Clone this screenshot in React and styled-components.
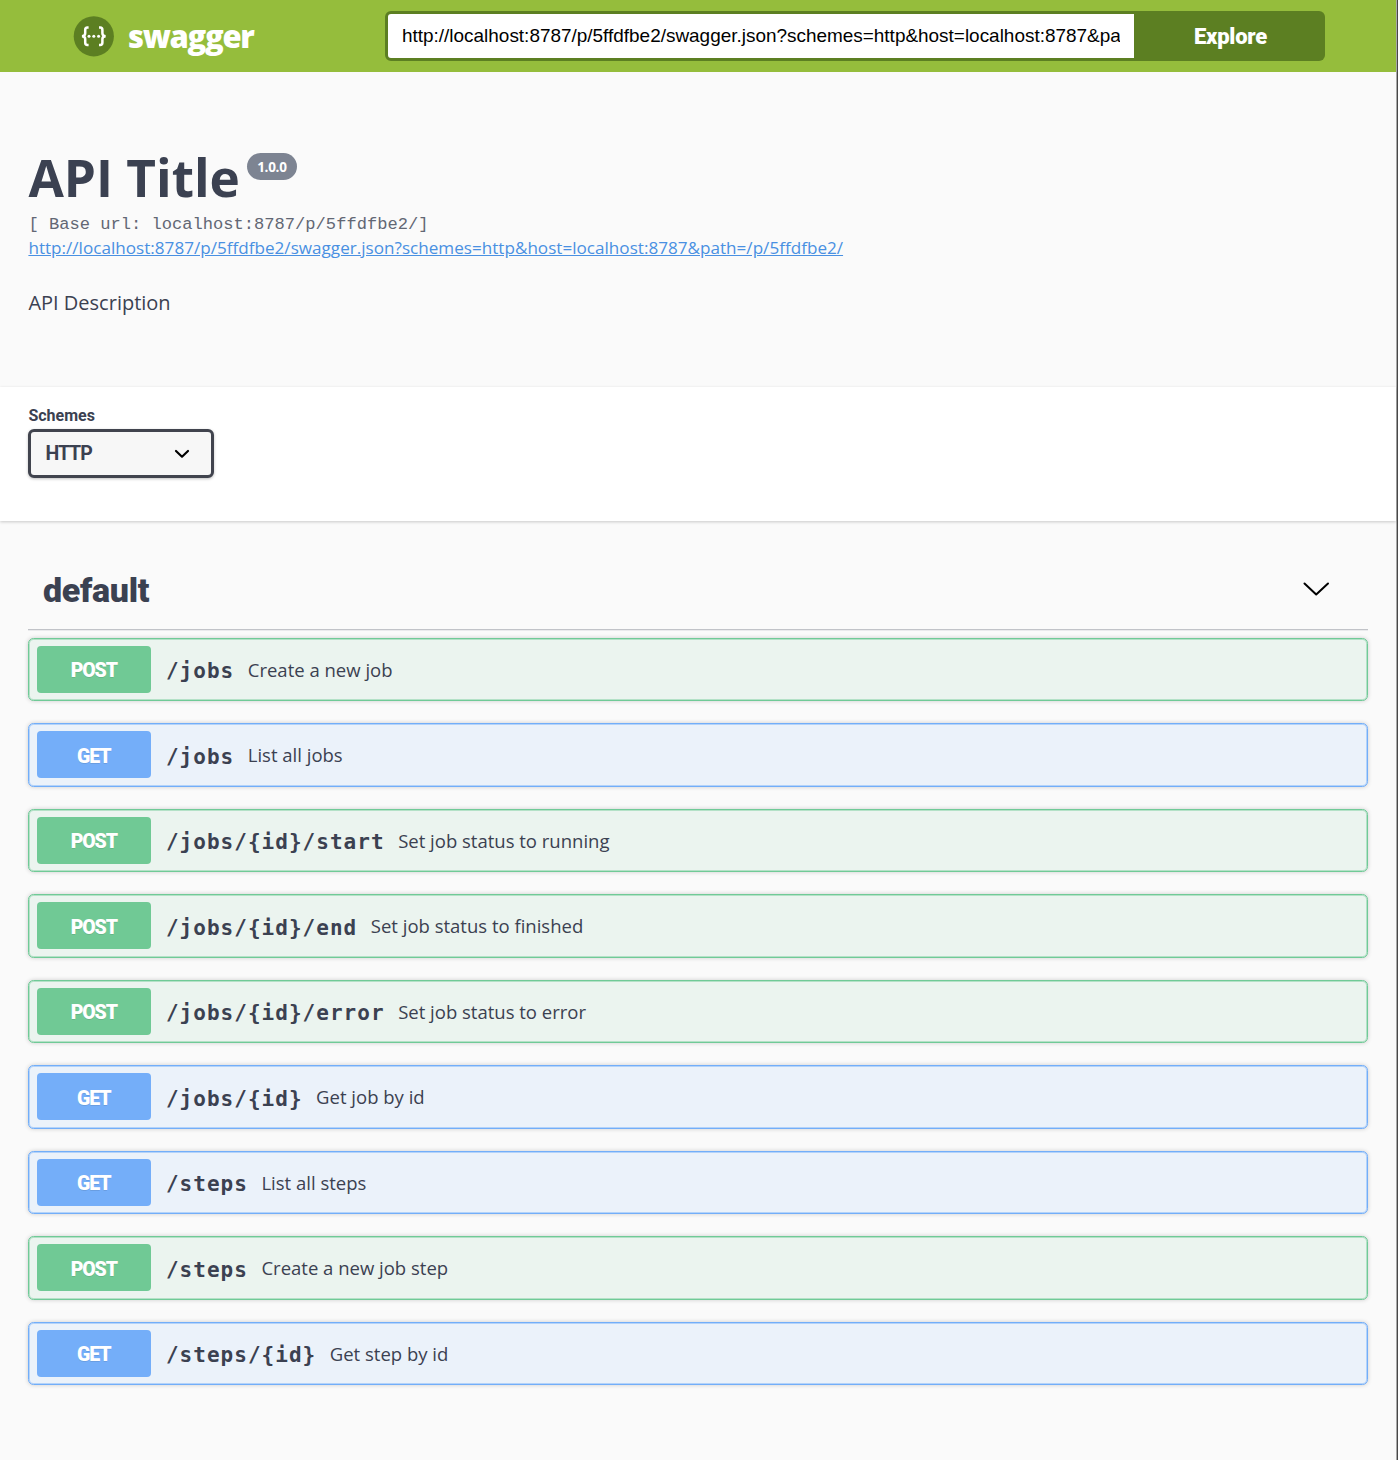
import React from 'react';
import styled, { createGlobalStyle } from 'styled-components';

const heading = 'Roboto, "Noto Sans", sans-serif';
const body = '"Open Sans", "Noto Sans", sans-serif';
const mono = '"DejaVu Sans Mono", monospace';
const ink = '#3b4151';

const Global = createGlobalStyle`
  *, *::before, *::after { box-sizing: border-box; }
  body { margin: 0; background: #fafafa; }
`;

const Page = styled.div`
  height: 1460px;
  overflow: hidden;
  background: #fafafa;
  border-right: 1px solid #484848;
  box-shadow: inset -1px 0 #a8a8a8;
  padding-right: 1px;
  color: ${ink};
  font-family: ${body};
`;

const Topbar = styled.header`
  height: 72px;
  padding: 11px 71px 0 73px;
  display: flex;
  background: #95bd3c;
`;

const Brand = styled.div`
  width: 312px;
  height: 50px;
  display: flex;
  align-items: center;
  gap: 14px;
`;

const BrandName = styled.span`
  font: 800 31px/40px ${body};
  letter-spacing: -1.35px;
  color: #fff;
`;

const UrlInput = styled.input`
  width: 750px;
  height: 49.5px;
  margin: 0;
  padding: 0 14px;
  border: 3px solid #5c7f22;
  border-right-width: 1px;
  border-radius: 6px 0 0 6px;
  background: #fff;
  color: #000;
  font: 18.94px "Liberation Sans", Arial, sans-serif;
  outline: none;
`;

const Explore = styled.button`
  width: 190px;
  height: 49.5px;
  padding: 1px 0 0 1px;
  border: 0;
  border-radius: 0 6px 6px 0;
  background: #5c7f22;
  color: #fff;
  font: 900 22px/49px ${heading};
  letter-spacing: -0.2px;
`;

const Info = styled.section`
  height: 315px;
  padding: 70px 28.4px 0;
`;

const TitleRow = styled.div`
  height: 73px;
  display: flex;
  align-items: flex-start;
`;

const Title = styled.h1`
  margin: 0;
  font: 700 51.3px/70px ${body};
`;

const Version = styled.span`
  width: 50px;
  height: 27px;
  margin: 11px 0 0 7px;
  border-radius: 14px;
  background: #7d8492;
  color: #fff;
  font: 700 13.5px/28px ${body};
  letter-spacing: -0.3px;
  text-align: center;
`;

const BaseUrl = styled.pre`
  margin: 0;
  height: 21px;
  font: 17.1px/20px "Liberation Mono", monospace;
  color: #626774;
`;

const SpecLink = styled.a`
  display: block;
  width: max-content;
  font: 17.1px/24px ${body};
  letter-spacing: 0.01px;
  color: #4990e2;
  text-decoration: underline;
`;

const Description = styled.p`
  margin: 28px 0 0;
  font: 20px/30px ${body};
`;

const SchemeBar = styled.section`
  height: 134px;
  padding: 20px 28.4px 0;
  background: #fff;
  box-shadow: 0 1px 3px rgba(0, 0, 0, 0.2);
`;

const SchemeLabel = styled.label`
  display: block;
  height: 21.5px;
  font: 700 16px/17px ${heading};
`;

const Select = styled.div`
  width: 185.5px;
  height: 49.5px;
  padding: 1px 20.5px 0 14px;
  display: flex;
  align-items: center;
  justify-content: space-between;
  border: 3px solid #41444e;
  border-radius: 6px;
  background: #f7f7f7;
  box-shadow: 0 1px 3px rgba(0, 0, 0, 0.25);
  font: 700 19.5px/24px ${heading};
  letter-spacing: -1px;
`;

const Operations = styled.main`
  padding: 34px 28.4px 0;
`;

const Tag = styled.h2`
  height: 75px;
  margin: 0 0 7.5px;
  padding: 0 38px 4px 14.5px;
  display: flex;
  align-items: center;
  justify-content: space-between;
  border-bottom: 1px solid #c1c3c8;
  box-shadow: 0 1px #e9eaec;
  font: 900 34px/44px ${heading};
  letter-spacing: -0.3px;

  svg { margin-bottom: 2px; }
`;

const Block = styled.article`
  height: 63.5px;
  margin-bottom: 22px;
  padding: 0 7.4px;
  display: flex;
  align-items: center;
  border: 1px solid ${(p) => (p.$post ? '#70ca97' : '#72aef9')};
  border-radius: 5.5px;
  background: ${(p) => (p.$post ? '#ebf4ef' : '#ebf2fa')};
  box-shadow: inset 0 0 0 1px ${(p) => (p.$post ? 'rgba(112, 202, 151, 0.45)' : 'rgba(114, 174, 249, 0.45)')},
    0 0 4px rgba(0, 0, 0, 0.19);
`;

const Method = styled.span`
  width: 114px;
  height: 47px;
  padding-top: 1.5px;
  border-radius: 4px;
  background: ${(p) => (p.$post ? '#70c995' : '#74aef9')};
  color: #fff;
  font: 900 19.5px/47px ${heading};
  letter-spacing: -1.1px;
  text-align: center;
  text-shadow: 0 1px 0 rgba(0, 0, 0, 0.1);
`;

const Path = styled.span`
  margin: 4px 13.5px 0 15.1px;
  font: 700 21px/30px ${mono};
  letter-spacing: 1.03px;
`;

const Summary = styled.span`
  padding-top: 1px;
  font: 18.5px/28px ${body};
`;

const operations = [
  ['POST', '/jobs', 'Create a new job'],
  ['GET', '/jobs', 'List all jobs'],
  ['POST', '/jobs/{id}/start', 'Set job status to running'],
  ['POST', '/jobs/{id}/end', 'Set job status to finished'],
  ['POST', '/jobs/{id}/error', 'Set job status to error'],
  ['GET', '/jobs/{id}', 'Get job by id'],
  ['GET', '/steps', 'List all steps'],
  ['POST', '/steps', 'Create a new job step'],
  ['GET', '/steps/{id}', 'Get step by id'],
];

const specUrl = 'http://localhost:8787/p/5ffdfbe2/swagger.json?schemes=http&host=localhost:8787&path=/p/5ffdfbe2/';

function Logo() {
  return (
    <svg width="41" height="41" viewBox="0 0 41 41" fill="none">
      <circle cx="20.8" cy="20.3" r="20.1" fill="#5c7f22" />
      <g stroke="#fff" strokeWidth="2.5">
        <path d="M15.6 11.6h-1.2q-2.2 0-2.2 2.5v3.2q0 2.9-3.3 2.9 3.3 0 3.3 2.9v3.3q0 2.5 2.2 2.5h1.2" />
        <path d="M26 11.6h1.2q2.2 0 2.2 2.5v3.2q0 2.9 3.3 2.9-3.3 0-3.3 2.9v3.3q0 2.5-2.2 2.5H26" />
      </g>
      <g fill="#fff">
        <circle cx="16" cy="20.2" r="1.5" />
        <circle cx="20.8" cy="20.2" r="1.5" />
        <circle cx="25.6" cy="20.2" r="1.5" />
      </g>
    </svg>
  );
}

export default function App() {
  return (
    <Page>
      <Global />
      <Topbar>
        <Brand>
          <Logo />
          <BrandName>swagger</BrandName>
        </Brand>
        <UrlInput readOnly value={specUrl} />
        <Explore>Explore</Explore>
      </Topbar>
      <Info>
        <TitleRow>
          <Title>API Title</Title>
          <Version>1.0.0</Version>
        </TitleRow>
        <BaseUrl>[ Base url: localhost:8787/p/5ffdfbe2/]</BaseUrl>
        <SpecLink>{specUrl}</SpecLink>
        <Description>API Description</Description>
      </Info>
      <SchemeBar>
        <SchemeLabel>Schemes</SchemeLabel>
        <Select>
          HTTP
          <svg width="16" height="10" viewBox="0 0 16 10" fill="none">
            <path d="M2 2l6 5.7L14 2" stroke="#000" strokeWidth="2.2" strokeLinecap="round" strokeLinejoin="round" />
          </svg>
        </Select>
      </SchemeBar>
      <Operations>
        <Tag>
          default
          <svg width="28" height="16" viewBox="0 0 28 16" fill="none">
            <path d="M2.5 2.5l11.7 11L26 2.5" stroke="#000" strokeWidth="2" strokeLinecap="round" strokeLinejoin="round" />
          </svg>
        </Tag>
        {operations.map(([method, path, summary]) => (
          <Block key={method + path} $post={method === 'POST'}>
            <Method $post={method === 'POST'}>{method}</Method>
            <Path>{path}</Path>
            <Summary>{summary}</Summary>
          </Block>
        ))}
      </Operations>
    </Page>
  );
}
